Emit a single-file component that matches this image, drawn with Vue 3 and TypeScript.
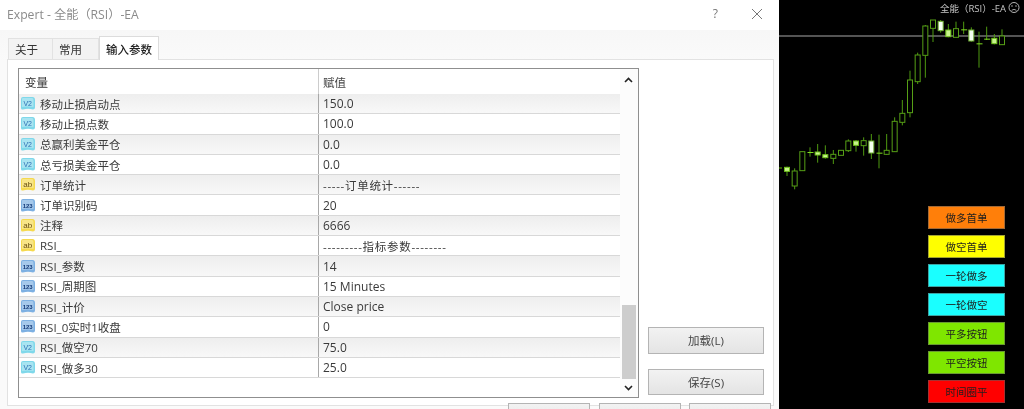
<script setup lang="ts">
type Kind = 'dbl' | 'str' | 'int'
interface Row { kind: Kind; name: string; value: string }
const rows: Row[] = [
  { kind: 'dbl', name: '移动止损启动点', value: '150.0' },
  { kind: 'dbl', name: '移动止损点数', value: '100.0' },
  { kind: 'dbl', name: '总赢利美金平仓', value: '0.0' },
  { kind: 'dbl', name: '总亏损美金平仓', value: '0.0' },
  { kind: 'str', name: '订单统计', value: '-----订单统计------' },
  { kind: 'int', name: '订单识别码', value: '20' },
  { kind: 'str', name: '注释', value: '6666' },
  { kind: 'str', name: 'RSI_', value: '---------指标参数--------' },
  { kind: 'int', name: 'RSI_参数', value: '14' },
  { kind: 'int', name: 'RSI_周期图', value: '15 Minutes' },
  { kind: 'int', name: 'RSI_计价', value: 'Close price' },
  { kind: 'int', name: 'RSI_0实时1收盘', value: '0' },
  { kind: 'dbl', name: 'RSI_做空70', value: '75.0' },
  { kind: 'dbl', name: 'RSI_做多30', value: '25.0' },
]
const iconText: Record<Kind, string> = { dbl: 'V2', str: 'ab', int: '123' }

// x, wick top, wick bottom, body top, body bottom, style (in 3x zoom coordinates)
type Style = 'h' | 'f' | 'w' | 'd'
const raw: [number, number, number, number, number, Style][] = [
  [21, 500, 528, 502, 514, 'f'], [44, 505, 568, 513, 558, 'h'], [67, 455, 512, 455, 512, 'h'],
  [90, 442, 470, 456, 458, 'd'], [113, 432, 488, 456, 465, 'f'], [136, 436, 476, 464, 473, 'f'],
  [160, 450, 492, 463, 475, 'h'], [183, 451, 466, 451, 466, 'h'], [205, 418, 456, 423, 452, 'h'],
  [228, 420, 455, 423, 436, 'f'], [251, 412, 467, 422, 437, 'h'], [274, 402, 477, 423, 459, 'w'],
  [297, 404, 505, 458, 460, 'd'], [320, 402, 465, 451, 463, 'h'], [344, 352, 456, 364, 455, 'h'],
  [367, 300, 376, 340, 367, 'h'], [390, 212, 352, 240, 338, 'h'], [413, 158, 252, 165, 245, 'h'],
  [436, 75, 233, 78, 166, 'h'], [459, 60, 126, 60, 85, 'h'], [482, 60, 98, 64, 92, 'w'],
  [505, 72, 112, 90, 110, 'f'], [528, 65, 112, 86, 112, 'h'], [551, 65, 102, 88, 91, 'd'],
  [574, 82, 125, 90, 123, 'w'], [597, 95, 203, 130, 132, 'd'], [620, 80, 120, 116, 119, 'd'],
  [643, 102, 133, 115, 131, 'f'], [666, 88, 135, 108, 134, 'h'],
]
const candles = raw.map(([x, wt, wb, bt, bb, s]) => ({
  x: x / 3 + 1,
  wt: wt / 3,
  wb: wb / 3,
  bt: bt / 3,
  h: Math.max((bb - bt) / 3, 1),
  s,
}))

const actions = [
  { label: '做多首单', color: '#ff7f0a' },
  { label: '做空首单', color: '#ffff00' },
  { label: '一轮做多', color: '#1affff' },
  { label: '一轮做空', color: '#1affff' },
  { label: '平多按钮', color: '#7fe600' },
  { label: '平空按钮', color: '#7fe600' },
  { label: '时间圈平', color: '#ff0000' },
]
</script>

<template>
  <div class="screen">
    <section class="dialog">
      <header class="titlebar">
        <span class="title">Expert - 全能（RSI）-EA</span>
        <span class="help">?</span>
        <svg class="close" width="12" height="12" viewBox="0 0 12 12">
          <path d="M1 1 L11 11 M11 1 L1 11" stroke="#777" stroke-width="1" fill="none" />
        </svg>
      </header>

      <div class="body">
        <nav class="tabs">
          <span class="tab">关于</span>
          <span class="tab">常用</span>
          <span class="tab active">输入参数</span>
        </nav>

        <div class="panel">
          <div class="table">
            <div class="grid">
              <div class="head">
                <span class="c1 headc1">变量</span>
                <span class="c2">赋值</span>
              </div>
              <div v-for="(r, i) in rows" :key="i" class="row" :class="{ shade: i % 2 === 0 }">
                <span class="c1">
                  <svg class="ico" width="16" height="15" viewBox="0 0 16 15">
                    <path
                      d="M1 3 Q1 1 3 1 L12.5 1 Q15 1 15 4 L15 11.5 Q15 13.5 13 13.5 Q8 12 3 13.5 Q1 14 1 12 Z"
                      :class="r.kind"
                    />
                    <path d="M2 3 Q2 2 3 2 L12 2 Q13.5 2 13.5 4 L13.5 11 Q8 10 2 11 Z" fill="#fff" opacity="0.32" />
                    <text x="7.7" y="10" text-anchor="middle" :class="'t-' + r.kind">{{ iconText[r.kind] }}</text>
                  </svg>
                  <span class="nm">{{ r.name }}</span>
                </span>
                <span class="c2" :class="{ dash: r.value.startsWith('-') }">{{ r.value }}</span>
              </div>
            </div>
            <div class="scroll">
              <svg class="arrow" width="9" height="6" viewBox="0 0 9 6">
                <path d="M1 5 L4.5 1.5 L8 5" stroke="#222" stroke-width="1.6" fill="none" />
              </svg>
              <div class="thumb"></div>
              <svg class="arrow" width="9" height="6" viewBox="0 0 9 6">
                <path d="M1 1 L4.5 4.5 L8 1" stroke="#222" stroke-width="1.6" fill="none" />
              </svg>
            </div>
          </div>
          <div class="side">
            <button class="btn side-btn">加载(L)</button>
            <button class="btn side-btn">保存(S)</button>
          </div>
        </div>

        <footer class="foot">
          <button class="btn foot-btn"></button>
          <button class="btn foot-btn"></button>
          <button class="btn foot-btn"></button>
        </footer>
      </div>
    </section>

    <section class="chart">
      <svg class="plot" width="245" height="409" viewBox="0 0 245 409">
        <line x1="0" y1="36" x2="245" y2="36" stroke="#a8a8a8" stroke-width="1" />
        <rect x="0" y="167.5" width="3" height="1" fill="#5fb000" />
        <g v-for="(c, i) in candles" :key="i">
          <line :x1="c.x" :x2="c.x" :y1="c.wt" :y2="c.wb" stroke="#4f9a10" stroke-width="1" />
          <rect
            v-if="c.s === 'h'"
            :x="c.x - 2.5" :y="c.bt" width="5" :height="c.h"
            fill="#000" stroke="#569f16" stroke-width="1"
          />
          <rect
            v-else-if="c.s === 'f'"
            :x="c.x - 2.5" :y="c.bt" width="5" :height="c.h"
            fill="#c8f58c" stroke="#6fc01c" stroke-width="1"
          />
          <rect
            v-else-if="c.s === 'w'"
            :x="c.x - 2.5" :y="c.bt" width="5" :height="c.h"
            fill="#f4fff0" stroke="#6fb030" stroke-width="1"
          />
          <rect v-else :x="c.x - 2.5" :y="c.bt" width="6" height="1" fill="#7fdc20" />
        </g>
        <circle cx="235" cy="7.5" r="5" fill="none" stroke="#c8c8c8" stroke-width="0.9" />
        <circle cx="233" cy="6" r="0.7" fill="#c8c8c8" />
        <circle cx="237" cy="6" r="0.7" fill="#c8c8c8" />
        <path d="M232.6 10.3 Q235 8.4 237.4 10.3" fill="none" stroke="#c8c8c8" stroke-width="0.8" />
      </svg>
      <span class="ea">全能（RSI）-EA</span>
      <div class="actions">
        <button
          v-for="a in actions"
          :key="a.label"
          class="act"
          :style="{ backgroundColor: a.color }"
        >{{ a.label }}</button>
      </div>
    </section>
  </div>
</template>

<style>
html, body { margin: 0; background: #000; }
</style>

<style scoped>
.screen {
  width: 1024px;
  height: 409px;
  overflow: hidden;
  display: flex;
  font-family: "Open Sans", "Noto Sans CJK SC", sans-serif;
  font-size: 11.5px;
  color: #333;
  filter: blur(0.6px);
}
.dialog {
  width: 779px;
  flex: none;
  background: #fdfdfd;
  display: flex;
  flex-direction: column;
}
.titlebar {
  height: 27px;
  flex: none;
  display: flex;
  align-items: center;
  padding: 0 16px 3px 7px;
  background: #fff;
}
.title { font-size: 12.2px; color: #8a8a8a; flex: 1; }
.help { color: #777; font-size: 12px; margin-right: 33px; }
.body {
  flex: 1;
  background: linear-gradient(#f7f7f7 0, #fafafa 32px, #fafafa 100%);
  padding: 6px 5px 0 7px;
  min-height: 0;
}
.tabs { height: 23px; display: flex; align-items: flex-end; padding-left: 1px; }
.tab {
  height: 21px;
  width: 46px;
  box-sizing: border-box;
  display: flex;
  align-items: center;
  padding-left: 6px;
  background: #f3f3f3;
  border: 1px solid #e2e2e2;
  border-bottom: none;
  border-left: none;
  color: #333;
}
.tab:first-child { border-left: 1px solid #e2e2e2; width: 45px; }
.tab.active {
  width: 60px;
  height: 24px;
  background: #fff;
  margin-bottom: -1px;
  position: relative;
  z-index: 1;
  border: 1px solid #dcdcdc;
  border-bottom: none;
  color: #222;
  font-weight: 500;
}
.panel {
  height: 347px;
  box-sizing: border-box;
  background: #fff;
  border: 1px solid #e2e2e2;
  padding: 8px 9px 8px 10px;
  display: flex;
  position: relative;
}
.table {
  width: 621px;
  height: 330px;
  box-sizing: border-box;
  border: 1px solid #8f8f8f;
  display: flex;
  flex: none;
  background: #fff;
}
.grid { flex: 1; min-width: 0; }
.head, .row { display: flex; }
.head { height: 25px; align-items: center; background: #fff; color: #333; }
.row {
  height: 20.3px;
  box-sizing: border-box;
  align-items: center;
  border-bottom: 1px solid #d8d8d8;
  color: #3a3a3a;
}
.row.shade { background: linear-gradient(#eeeeee, #f8f8f8); }
.c1 {
  width: 300px;
  height: 100%;
  box-sizing: border-box;
  flex: none;
  display: flex;
  align-items: center;
  border-right: 1px solid #a8a8a8;
  padding-left: 1px;
}
.headc1 { padding-left: 6px; border-right-color: #ccc; }
.c2 { padding-left: 4px; white-space: nowrap; font-size: 12px; }
.c2.dash { letter-spacing: 0.7px; font-size: 11.5px; }
.head .c2 { color: #444; font-size: 11.5px; }
.nm { margin-left: 4px; white-space: nowrap; }
.ico { flex: none; }
.dbl { fill: #7fd8ea; }
.str { fill: #f5d94e; }
.int { fill: #7db0e2; }
.ico text { font-family: "Liberation Sans", sans-serif; }
.t-dbl { fill: #2e6fb4; font-size: 7px; }
.t-str { fill: #6b5010; font-size: 8px; }
.t-int { fill: #143a78; font-size: 6px; font-weight: 700; }
.scroll {
  width: 18px;
  flex: none;
  display: flex;
  flex-direction: column;
  align-items: center;
  padding: 8px 1px 6px 0;
  box-sizing: border-box;
  background: #fcfcfc;
}
.arrow { flex: none; }
.thumb { width: 14px; height: 74px; background: #cdcdcd; margin-top: auto; margin-bottom: 6px; }
.side {
  flex: 1;
  display: flex;
  flex-direction: column;
  align-items: flex-end;
  justify-content: flex-end;
  gap: 15px;
  padding-bottom: 2px;
}
.btn {
  box-sizing: border-box;
  background: linear-gradient(#f2f2f2, #e4e4e4);
  border: 1px solid #b4b4b4;
  font: inherit;
  color: #444;
  padding: 0;
}
.side-btn { width: 116px; height: 26.5px; }
.foot {
  display: flex;
  justify-content: flex-end;
  gap: 8.5px;
  margin-top: -3px;
  padding-right: 3px;
  position: relative;
}
.foot-btn { width: 82px; height: 26px; }
.chart {
  flex: 1;
  background: #000;
  position: relative;
  overflow: hidden;
}
.plot { position: absolute; left: 0; top: 0; }
.ea {
  position: absolute;
  top: 1px;
  left: 161px;
  font-size: 9.5px;
  color: #c4c4c4;
  white-space: nowrap;
}
.actions {
  position: absolute;
  left: 149px;
  top: 206px;
  display: flex;
  flex-direction: column;
  gap: 6px;
}
.act {
  width: 77px;
  height: 23px;
  box-sizing: border-box;
  border: 1px solid rgba(90, 90, 90, 0.55);
  padding: 0;
  font-family: "Noto Sans CJK SC", sans-serif;
  font-size: 10.5px;
  color: #1e1e1e;
}
</style>
